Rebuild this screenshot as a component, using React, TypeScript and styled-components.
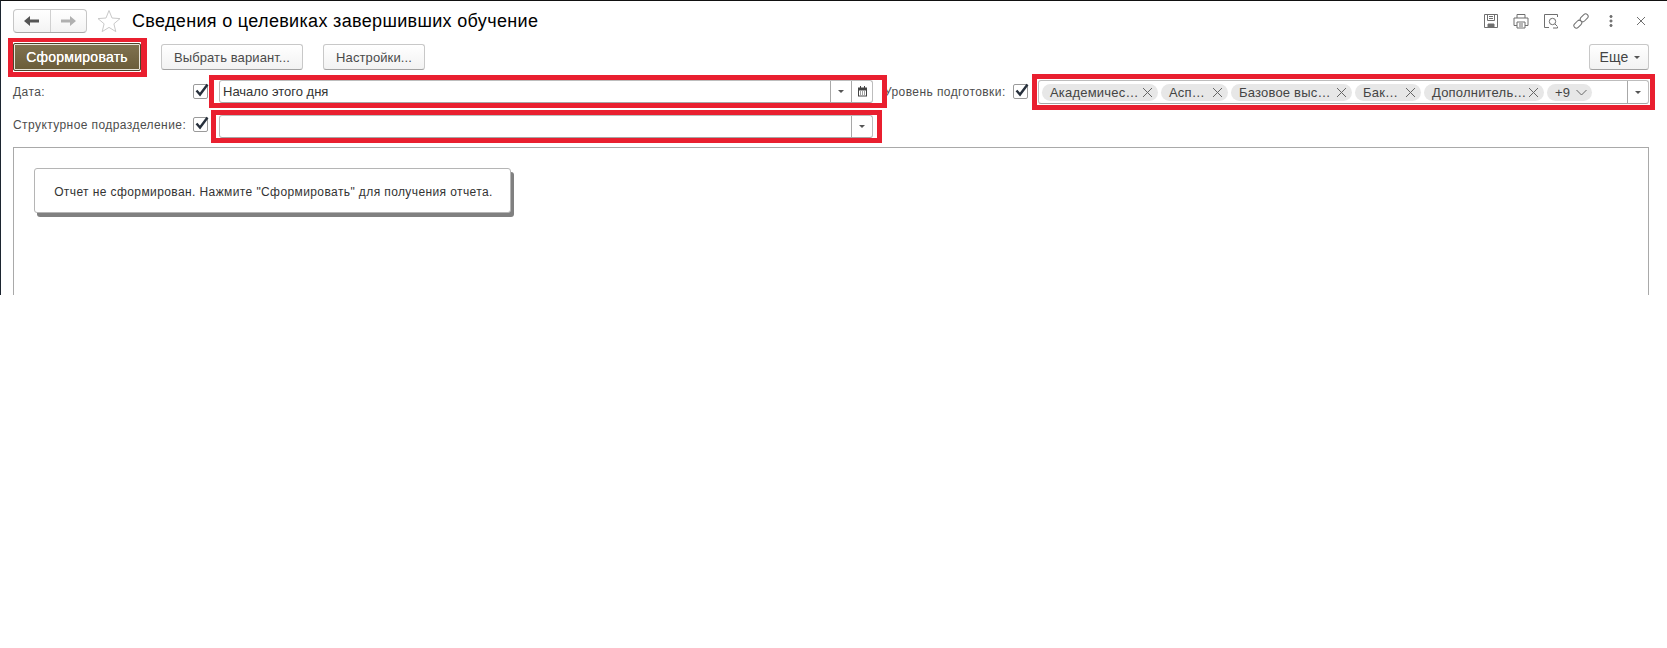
import styled, { createGlobalStyle } from "styled-components";

const GlobalStyle = createGlobalStyle`
  html, body {
    margin: 0;
    padding: 0;
    background: #fff;
    font-family: "Liberation Sans", Arial, sans-serif;
  }
`;

const Window = styled.div`
  height: 295px;
  box-sizing: border-box;
  border-top: 1px solid #111;
  border-left: 1px solid #1c2530;
  padding: 8px 18px 0 12px;
  display: flex;
  flex-direction: column;
  overflow: hidden;
`;

const Header = styled.header`
  height: 24px;
  display: flex;
  align-items: center;
`;

const NavGroup = styled.div`
  width: 74px;
  height: 24px;
  box-sizing: border-box;
  display: flex;
  border: 1px solid #c6c6c6;
  border-bottom-color: #a8a8a8;
  border-radius: 4px;
  background: linear-gradient(#fff, #f3f3f3);
`;

const NavButton = styled.button`
  flex: 1;
  padding: 0;
  border: 0;
  background: none;
  display: flex;
  align-items: center;
  justify-content: center;
  & + & {
    border-left: 1px solid #d0d0d0;
  }
`;

const StarIcon = styled.svg`
  width: 24px;
  height: 24px;
  margin-left: 10px;
`;

const Title = styled.h1`
  margin: 0 0 0 11px;
  font-size: 18px;
  font-weight: 400;
  letter-spacing: 0.33px;
  color: #000;
  white-space: nowrap;
`;

const HeaderIcons = styled.div`
  margin-left: auto;
  display: flex;
  align-items: center;
  gap: 14px;
`;

const HeaderIcon = styled.svg`
  width: 16px;
  height: 16px;
  fill: none;
  stroke: #6f6f6f;
  stroke-width: 1;
`;

const Toolbar = styled.div`
  height: 40px;
  margin-top: 4px;
  display: flex;
  align-items: center;
`;

const Highlight = styled.div<{ $left: number; $right: number; $y?: number; $top?: number; $shift?: number }>`
  position: relative;
  z-index: 1;
  box-sizing: border-box;
  flex: none;
  display: flex;
  border: 5px solid #e91f2f;
  padding: ${(props) => props.$y ?? 0}px ${(props) => props.$right}px ${(props) => props.$y ?? 0}px
    ${(props) => props.$left}px;
  margin-top: ${(props) => props.$top ?? 0}px;
  margin-left: ${(props) => props.$shift ?? 0}px;
`;

const ToolbarHighlight = styled(Highlight)`
  border-width: 4px 6px 5px 5px;
  padding: 1px 0 1px 0;
`;

const PrimaryButton = styled.button`
  width: 128px;
  height: 28px;
  box-sizing: border-box;
  padding: 0;
  border: 1px solid #4e4229;
  outline: 1px solid #e9e5da;
  outline-offset: -2px;
  border-radius: 2px;
  background: linear-gradient(#80724f, #6a5c39);
  color: #fff;
  font-family: inherit;
  font-size: 14px;
  letter-spacing: 0.25px;
  text-shadow: 0 0 0.5px #fff;
`;

const Button = styled.button<{ $width: number; $gap: number }>`
  width: ${(props) => props.$width}px;
  margin-left: ${(props) => props.$gap}px;
  height: 26px;
  box-sizing: border-box;
  padding: 0;
  border: 1px solid #c8c8c8;
  border-bottom-color: #a2a2a2;
  border-radius: 3px;
  background: linear-gradient(#fff, #f2f2f2);
  color: #4a4a4a;
  font-family: inherit;
  font-size: 13px;
  letter-spacing: 0.1px;
`;

const MoreButton = styled(Button)`
  margin-left: auto;
  display: flex;
  align-items: center;
  justify-content: center;
  gap: 6px;
  padding-left: 2px;
  color: #444;
  font-size: 14px;
  &::after {
    content: "";
    border: 3px solid transparent;
    border-top: 3px solid #555;
    margin-top: 4px;
  }
`;

const FilterRow = styled.div<{ $height: number; $top?: number }>`
  height: ${(props) => props.$height}px;
  margin-top: ${(props) => props.$top ?? 0}px;
  display: flex;
  align-items: flex-start;
`;

const Label = styled.span<{ $width: number; $top: number; $shift?: number }>`
  flex: none;
  width: ${(props) => props.$width}px;
  margin-top: ${(props) => props.$top}px;
  margin-left: ${(props) => props.$shift ?? 0}px;
  font-size: 12px;
  line-height: 16px;
  color: #4d4d4d;
  letter-spacing: 0.42px;
  white-space: nowrap;
`;

const CheckBox = styled.span<{ $top: number; $gap: number }>`
  flex: none;
  width: 15px;
  height: 15px;
  box-sizing: border-box;
  margin-top: ${(props) => props.$top}px;
  margin-right: ${(props) => props.$gap}px;
  border: 1px solid #9a9a9a;
  border-radius: 2px;
  background: #fff;
  position: relative;
`;

const CheckMark = styled.svg`
  position: absolute;
  left: 0;
  top: -3px;
  width: 16px;
  height: 16px;
  fill: none;
  stroke: #27303c;
  stroke-width: 2.4;
`;

const Field = styled.div<{ $width: number; $height: number }>`
  width: ${(props) => props.$width}px;
  height: ${(props) => props.$height}px;
  box-sizing: border-box;
  display: flex;
  align-items: center;
  border: 1px solid #bdbdbd;
  border-bottom-color: #a6a6a6;
  border-radius: 3px;
  background: #fff;
`;

const FieldValue = styled.span`
  flex: 1;
  min-width: 0;
  padding-left: 3px;
  font-size: 13px;
  color: #333;
`;

const FieldButton = styled.span`
  flex: none;
  width: 21px;
  height: 100%;
  box-sizing: border-box;
  border-left: 1px solid #a8a8a8;
  display: flex;
  align-items: center;
  justify-content: center;
`;

const ArrowDown = styled.span`
  width: 0;
  height: 0;
  border: 3px solid transparent;
  border-top: 3px solid #555;
  margin-top: 3px;
`;

const TagList = styled.div`
  flex: 1;
  display: flex;
  align-items: center;
  gap: 3px;
  padding-left: 3px;
`;

const Tag = styled.span<{ $width: number }>`
  flex: none;
  width: ${(props) => props.$width}px;
  height: 17px;
  box-sizing: border-box;
  padding: 0 5px 0 8px;
  display: flex;
  align-items: center;
  justify-content: space-between;
  border-radius: 9px;
  background: #e7e7e7;
  font-size: 13px;
  color: #444;
  letter-spacing: 0.2px;
  white-space: nowrap;
`;

const TagIcon = styled.svg`
  flex: none;
  width: 11px;
  height: 11px;
  fill: none;
  stroke: #666;
  stroke-width: 1;
`;

const ReportFrame = styled.div`
  flex: 1;
  margin-top: 4px;
  padding: 20px 20px 0;
  border: 1px solid #a9a9a9;
  border-bottom: 0;
`;

const Message = styled.div`
  width: 477px;
  height: 45px;
  box-sizing: border-box;
  padding: 2px 0 0 2px;
  display: flex;
  align-items: center;
  justify-content: center;
  border: 1px solid #b5b5b5;
  border-radius: 3px;
  background: #fff;
  box-shadow: 3px 4px 0 #808080;
  font-size: 12px;
  color: #333;
  letter-spacing: 0.4px;
`;

const tags = [
  { text: "Академичес…", width: 116 },
  { text: "Асп…", width: 67 },
  { text: "Базовое выс…", width: 121 },
  { text: "Бак…", width: 66 },
  { text: "Дополнитель…", width: 120 },
];

function Check() {
  return (
    <CheckMark viewBox="0 0 16 16">
      <path d="M2.5 8.5 L6 12.5 L13.5 2.5" />
    </CheckMark>
  );
}

function CloseIcon() {
  return (
    <TagIcon viewBox="0 0 11 11">
      <path d="M1 1 L10 10 M10 1 L1 10" />
    </TagIcon>
  );
}

export default function App() {
  return (
    <>
      <GlobalStyle />
      <Window>
        <Header>
          <NavGroup>
            <NavButton>
              <svg width="15" height="10" viewBox="0 0 15 10">
                <path d="M0 5 L6 0 V3.5 H15 V6.5 H6 V10 Z" fill="#555" />
              </svg>
            </NavButton>
            <NavButton>
              <svg width="15" height="10" viewBox="0 0 15 10">
                <path d="M15 5 L9 0 V3.5 H0 V6.5 H9 V10 Z" fill="#b0b0b0" />
              </svg>
            </NavButton>
          </NavGroup>
          <StarIcon viewBox="0 0 24 24">
            <path
              d="M12 1.5 L15 9 L23 9.6 L16.9 14.8 L18.8 22.6 L12 18.4 L5.2 22.6 L7.1 14.8 L1 9.6 L9 9 Z"
              fill="#fff"
              stroke="#c9c9c9"
            />
          </StarIcon>
          <Title>Сведения о целевиках завершивших обучение</Title>
          <HeaderIcons>
            <HeaderIcon viewBox="0 0 16 16">
              <path d="M1.5 1.5 H14.5 V14.5 H1.5 Z M4.5 1.5 V7.5 H11.5 V1.5 M6 3.5 H10 M6 5.5 H10" />
              <path d="M5 11 H11 V14.5 H5 Z" fill="#6f6f6f" />
            </HeaderIcon>
            <HeaderIcon viewBox="0 0 16 16">
              <path d="M4 5 V1.5 H12 V5 M4 12.5 H1 V5 H15 V12.5 H12 M4 9 H12 V15 H4 Z M6 11 H10 M6 13 H10" />
            </HeaderIcon>
            <HeaderIcon viewBox="0 0 16 16">
              <path d="M14.5 4 V1.5 H1.5 V14.5 H6 M10 15 H14.5 V14" />
              <circle cx="9.5" cy="8.5" r="3.2" />
              <path d="M12 11 L14.5 13.5" />
            </HeaderIcon>
            <HeaderIcon viewBox="0 0 16 16">
              <g transform="rotate(-45 8 8)">
                <rect x="-1" y="5.5" width="9" height="5" rx="2.5" />
                <rect x="8" y="5.5" width="9" height="5" rx="2.5" />
              </g>
            </HeaderIcon>
            <HeaderIcon viewBox="0 0 16 16">
              <circle cx="8" cy="3.5" r="1.1" fill="#6f6f6f" />
              <circle cx="8" cy="8" r="1.1" fill="#6f6f6f" />
              <circle cx="8" cy="12.5" r="1.1" fill="#6f6f6f" />
            </HeaderIcon>
            <HeaderIcon viewBox="0 0 16 16">
              <path d="M4 4 L12 12 M12 4 L4 12" />
            </HeaderIcon>
          </HeaderIcons>
        </Header>

        <Toolbar>
          <ToolbarHighlight $left={0} $right={0} $shift={-5}>
            <PrimaryButton>Сформировать</PrimaryButton>
          </ToolbarHighlight>
          <Button $width={142} $gap={14}>
            Выбрать вариант...
          </Button>
          <Button $width={102} $gap={20}>
            Настройки...
          </Button>
          <MoreButton $width={60} $gap={0}>
            Еще
          </MoreButton>
        </Toolbar>

        <FilterRow $height={36} $top={-3}>
          <Label $width={180} $top={10}>
            Дата:
          </Label>
          <CheckBox $top={10} $gap={1}>
            <Check />
          </CheckBox>
          <Highlight $left={5} $right={9} $top={1}>
            <Field $width={654} $height={23}>
              <FieldValue>Начало этого дня</FieldValue>
              <FieldButton>
                <ArrowDown />
              </FieldButton>
              <FieldButton>
                <svg width="11" height="11" viewBox="0 0 11 11">
                  <path d="M1 1.5 H10 V10.5 H1 Z M2 4.5 V9.5 H9 V4.5 Z" fill="#444" fillRule="evenodd" />
                  <path
                    d="M3 0 H4 V2 H3 Z M7 0 H8 V2 H7 Z M3 5.5 H4 V6.5 H3 Z M5 5.5 H6 V6.5 H5 Z M7 5.5 H8 V6.5 H7 Z M3 7.5 H4 V8.5 H3 Z M5 7.5 H6 V8.5 H5 Z M7 7.5 H8 V8.5 H7 Z"
                    fill="#444"
                  />
                </svg>
              </FieldButton>
            </Field>
          </Highlight>
          <Label $width={129} $top={10} $shift={-3}>
            Уровень подготовки:
          </Label>
          <CheckBox $top={10} $gap={4}>
            <Check />
          </CheckBox>
          <Highlight $left={1} $right={1} $y={1}>
            <Field $width={611} $height={24}>
              <TagList>
                {tags.map((tag) => (
                  <Tag key={tag.text} $width={tag.width}>
                    {tag.text}
                    <CloseIcon />
                  </Tag>
                ))}
                <Tag $width={45}>
                  +9
                  <TagIcon viewBox="0 0 11 11">
                    <path d="M0.5 3 L5.5 8 L10.5 3" />
                  </TagIcon>
                </Tag>
              </TagList>
              <FieldButton>
                <ArrowDown />
              </FieldButton>
            </Field>
          </Highlight>
        </FilterRow>

        <FilterRow $height={33}>
          <Label $width={180} $top={7}>
            Структурное подразделение:
          </Label>
          <CheckBox $top={7} $gap={3}>
            <Check />
          </CheckBox>
          <Highlight $left={3} $right={4}>
            <Field $width={654} $height={23}>
              <FieldValue />
              <FieldButton>
                <ArrowDown />
              </FieldButton>
            </Field>
          </Highlight>
        </FilterRow>

        <ReportFrame>
          <Message>Отчет не сформирован. Нажмите "Сформировать" для получения отчета.</Message>
        </ReportFrame>
      </Window>
    </>
  );
}
